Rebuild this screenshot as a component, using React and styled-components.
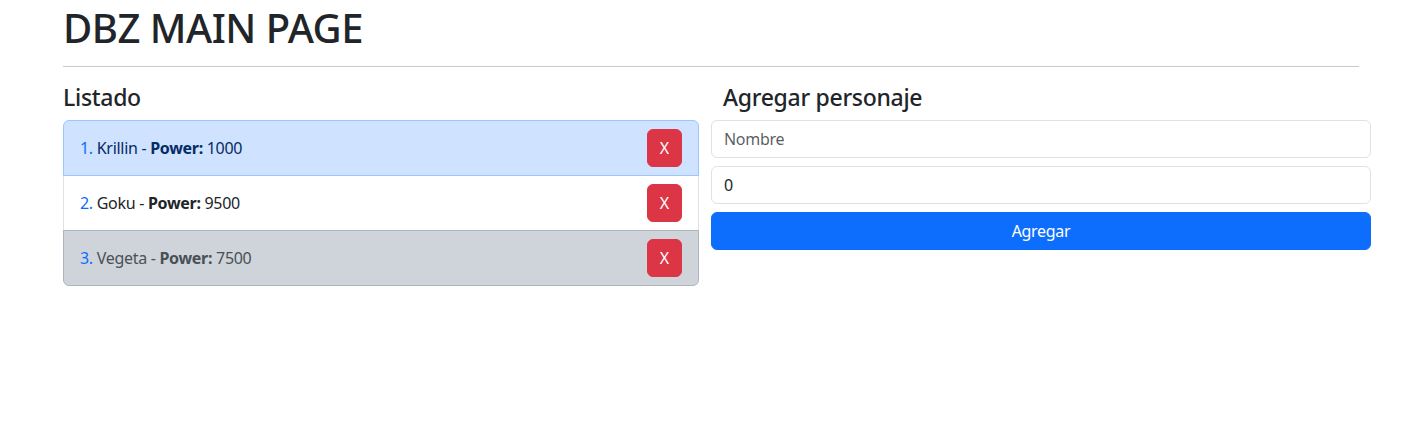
import styled, { createGlobalStyle } from "styled-components";

const GlobalStyle = createGlobalStyle`
  body {
    margin: 0;
    font-family: "Noto Sans", "Open Sans", sans-serif;
    font-size: 16px;
    letter-spacing: -0.3px;
    color: #212529;
    background: #fff;
  }
  * { box-sizing: border-box; }
`;

const Container = styled.div`
  width: 1320px;
  margin: 0 auto;
  padding: 0 12px;
`;

const Title = styled.h1`
  font-size: 40px;
  font-weight: 500;
  line-height: 48px;
  letter-spacing: -0.5px;
  margin: 4px 0 0;
`;

const Rule = styled.hr`
  border: 0;
  border-top: 1px solid #c8c9ca;
  margin: 14px 0 16px;
`;

const Row = styled.div`
  display: grid;
  grid-template-columns: 660px 660px;
  margin: 0 -12px;
`;

const Column = styled.div`
  padding: ${(p) => (p.$flush ? "0" : "0 12px")};
`;

const Heading = styled.h4`
  font-size: 23px;
  font-weight: 500;
  line-height: 29px;
  letter-spacing: -0.3px;
  margin: 0 0 8px;
  padding-left: ${(p) => (p.$indent ? "12px" : "0")};
`;

const tones = {
  primary: { bg: "#cfe2ff", border: "#9ec5fe", color: "#052c65" },
  light: { bg: "#fff", border: "#dee2e6", color: "#212529" },
  dark: { bg: "#ced4da", border: "#adb5bd", color: "#495057" },
};

const List = styled.ol`
  list-style: none;
  margin: 0;
  padding: 0;
  display: flex;
  flex-direction: column;
`;

const Item = styled.li`
  display: flex;
  align-items: center;
  justify-content: space-between;
  padding: 8px 16px;
  background: ${(p) => tones[p.$tone].bg};
  color: ${(p) => tones[p.$tone].color};
  border: 1px solid ${(p) => tones[p.$tone].border};
  margin-top: -1px;
  position: relative;
  z-index: ${(p) => (p.$tone === "primary" ? 1 : 0)};
  &:first-child {
    margin-top: 0;
    border-radius: 6px 6px 0 0;
  }
  &:last-child {
    border-radius: 0 0 6px 6px;
  }
`;

const Num = styled.span`
  color: #0d6efd;
`;

const DeleteButton = styled.button`
  font-family: inherit;
  font-size: 16px;
  line-height: 24px;
  padding: 6px 12px;
  width: 35px;
  height: 38px;
  display: flex;
  align-items: center;
  justify-content: center;
  color: #fff;
  background: #dc3545;
  border: 1px solid #dc3545;
  border-radius: 6px;
`;

const Form = styled.form`
  display: flex;
  flex-direction: column;
  gap: 8px;
`;

const Input = styled.input`
  font-family: inherit;
  font-size: 16px;
  letter-spacing: -0.3px;
  height: 38px;
  padding: 6px 12px;
  color: #212529;
  border: 1px solid #dee2e6;
  border-radius: 6px;
  &::placeholder {
    color: rgba(33, 37, 41, 0.75);
  }
`;

const SubmitButton = styled.button`
  font-family: inherit;
  font-size: 16px;
  letter-spacing: -0.3px;
  height: 38px;
  color: #fff;
  background: #0d6efd;
  border: 1px solid #0d6efd;
  border-radius: 6px;
`;

const characters = [
  { name: "Krillin", power: 1000, tone: "primary" },
  { name: "Goku", power: 9500, tone: "light" },
  { name: "Vegeta", power: 7500, tone: "dark" },
];

const App = () => {
  return (
    <>
      <GlobalStyle />
      <Container>
        <Title>DBZ MAIN PAGE</Title>
        <Rule />
        <Row>
          <Column>
            <Heading>Listado</Heading>
            <List>
              {characters.map((c, i) => (
                <Item key={c.name} $tone={c.tone}>
                  <span>
                    <Num>{i + 1}.</Num> {c.name} - <b>Power:</b> {c.power}
                  </span>
                  <DeleteButton type="button">X</DeleteButton>
                </Item>
              ))}
            </List>
          </Column>
          <Column $flush>
            <Heading $indent>Agregar personaje</Heading>
            <Form onSubmit={(e) => e.preventDefault()}>
              <Input type="text" placeholder="Nombre" />
              <Input type="number" defaultValue={0} />
              <SubmitButton type="submit">Agregar</SubmitButton>
            </Form>
          </Column>
        </Row>
      </Container>
    </>
  );
};

export default App;
